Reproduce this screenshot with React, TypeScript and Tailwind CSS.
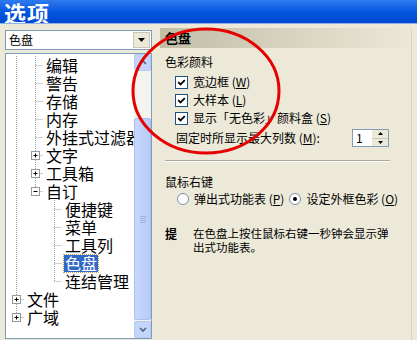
import React from 'react';

type Row = { t: string; l: 0 | 1 | 2; box?: '+' | '-'; sel?: boolean };

const rows: Row[] = [
  { t: '编辑', l: 1 },
  { t: '警告', l: 1 },
  { t: '存储', l: 1 },
  { t: '内存', l: 1 },
  { t: '外挂式过滤器', l: 1 },
  { t: '文字', l: 1, box: '+' },
  { t: '工具箱', l: 1, box: '+' },
  { t: '自订', l: 1, box: '-' },
  { t: '便捷键', l: 2 },
  { t: '菜单', l: 2 },
  { t: '工具列', l: 2 },
  { t: '色盘', l: 2, sel: true },
  { t: '连结管理', l: 2 },
  { t: '文件', l: 0, box: '+' },
  { t: '广域', l: 0, box: '+' },
];

const LX = [10.5, 29.5, 48.5];

function Gutter({ row, i }: { row: Row; i: number }) {
  const w = (row.l + 1) * 19;
  const lines: React.ReactNode[] = [];
  // root level vertical
  lines.push(<line key="v0" x1={LX[0]} y1={0} x2={LX[0]} y2={i === 14 ? 9 : 18} />);
  if (i <= 7) lines.push(<line key="v1" x1={LX[1]} y1={0} x2={LX[1]} y2={i === 7 ? 9 : 18} />);
  if (i >= 8 && i <= 12) lines.push(<line key="v2" x1={LX[2]} y1={0} x2={LX[2]} y2={i === 12 ? 9 : 18} />);
  const x = LX[row.l];
  lines.push(<line key="h" x1={x} y1={9.5} x2={x + 8} y2={9.5} />);
  return (
    <svg width={w} height={18} className="shrink-0">
      <g stroke="#a0a0a0" strokeDasharray="1 1" strokeWidth={1}>
        {lines}
      </g>
      {row.box && (
        <g>
          <rect x={x - 4} y={5.5} width={8} height={8} fill="#fff" stroke="#919b9c" />
          <line x1={x - 2} y1={9.5} x2={x + 2} y2={9.5} stroke="#000" />
          {row.box === '+' && <line x1={x} y1={7.5} x2={x} y2={11.5} stroke="#000" />}
        </g>
      )}
    </svg>
  );
}

function Check() {
  return (
    <span className="w-[13px] h-[13px] border border-[#1c5180] bg-white flex items-center justify-center shrink-0">
      <svg width="9" height="9" viewBox="0 0 9 9">
        <path d="M1.2 4.2 L3.5 6.5 L7.8 2.2" fill="none" stroke="#000" strokeWidth="1.8" />
      </svg>
    </span>
  );
}

function Radio({ on }: { on?: boolean }) {
  return (
    <span className="w-[12px] h-[12px] rounded-full border border-[#7a8ea8] bg-white flex items-center justify-center shrink-0">
      {on && <span className="w-[4px] h-[4px] rounded-full bg-black" />}
    </span>
  );
}

export default function App() {
  return (
    <div className="w-[417px] h-[340px] bg-[#ece9d8] relative overflow-hidden font-['Noto_Sans_CJK_SC',sans-serif] text-black">
      {/* title bar */}
      <div className="h-[23px] bg-gradient-to-b from-[#2f7bf0] via-[#0556e0] to-[#0048cf] text-white font-bold text-[22px] leading-[24px] pl-[4px] tracking-[1px] overflow-hidden">
        选项
      </div>
      <div className="h-[1px] bg-[#8fb0e8]" />

      <div className="flex gap-[8px] pl-[5px] pt-[4px]">
        {/* left column */}
        <div className="w-[147px] pt-[2px] flex flex-col gap-[3px]">
          <div className="h-[20px] border border-[#7f9db9] bg-white flex items-center">
            <span className="flex-1 pl-[3px] text-[12px] leading-[18px]">色盘</span>
            <span className="w-[17px] h-[16px] mr-[1px] bg-[#ece9d8] border border-[#c9c7ba] flex items-center justify-center">
              <svg width="7" height="4"><path d="M0 0 H7 L3.5 4 Z" fill="#000" /></svg>
            </span>
          </div>
          <div className="h-[286px] border border-[#7f9db9] bg-white flex">
            <div className="flex-1 overflow-hidden pt-[2px]">
              {rows.map((r, i) => (
                <div key={r.t} className="h-[18px] flex items-center whitespace-nowrap">
                  <Gutter row={r} i={i} />
                  <span
                    className={
                      r.sel
                        ? 'ml-[1px] px-[1px] text-[16px] leading-[17px] bg-[#316ac5] text-white outline outline-1 outline-dotted outline-[#c0a060]'
                        : 'ml-[2px] text-[16px] leading-[18px]'
                    }
                  >
                    {r.t}
                  </span>
                </div>
              ))}
            </div>
            {/* scrollbar */}
            <div className="w-[17px] flex flex-col bg-[#f4f3ee]">
              <div className="h-[17px] rounded-[2px] bg-[#c4d5fb] border border-[#b4c8f6] flex items-center justify-center">
                <svg width="8" height="5"><path d="M1 4 L4 1 L7 4" fill="none" stroke="#4d6185" strokeWidth="1.6" /></svg>
              </div>
              <div className="h-[47px]" />
              <div className="flex-1 rounded-[2px] bg-gradient-to-r from-[#c8d8fc] to-[#b8cbf7] border border-[#a8bff2] flex items-center justify-center">
                <div className="flex flex-col gap-[1px]">
                  <div className="w-[6px] h-[1px] bg-[#9cb1e4]" />
                  <div className="w-[6px] h-[1px] bg-[#9cb1e4]" />
                  <div className="w-[6px] h-[1px] bg-[#9cb1e4]" />
                  <div className="w-[6px] h-[1px] bg-[#9cb1e4]" />
                </div>
              </div>
              <div className="h-[17px] mt-[1px] rounded-[2px] bg-[#c4d5fb] border border-[#b4c8f6] flex items-center justify-center">
                <svg width="8" height="5"><path d="M1 1 L4 4 L7 1" fill="none" stroke="#4d6185" strokeWidth="1.6" /></svg>
              </div>
            </div>
          </div>
        </div>

        {/* right column */}
        <div className="w-[252px] h-[320px] border-r border-[#d8d4c4] text-[12px] leading-[16px]">
          <div className="h-[20px] bg-gradient-to-r from-[#c1bda6] to-[#ebe8d6] pl-[5px] font-bold text-[13px] leading-[20px]">
            色盘
          </div>
          <div className="pl-[5px]">
            <div className="mt-[6px]">色彩颜料</div>
            <div className="mt-[3px] pl-[10px] flex flex-col">
              <div className="h-[18px] flex items-center gap-[5px]"><Check /><span>宽边框 (<u>W</u>)</span></div>
              <div className="h-[18px] flex items-center gap-[5px]"><Check /><span>大样本 (<u>L</u>)</span></div>
              <div className="h-[18px] flex items-center gap-[5px]"><Check /><span>显示「无色彩」颜料盒 (<u>S</u>)</span></div>
            </div>
            <div className="mt-[2px] h-[18px] pl-[11px] flex items-center">
              <span className="flex-1">固定时所显示最大列数 (<u>M</u>):</span>
              <span className="w-[37px] h-[18px] mr-[22px] border border-[#7f9db9] bg-white flex items-center">
                <span className="flex-1 pl-[3px]">1</span>
                <span className="w-[16px] h-[16px] flex flex-col bg-[#ece9d8]">
                  <span className="flex-1 flex items-center justify-center border-b border-[#c9c7ba]">
                    <svg width="5" height="3"><path d="M0 3 L2.5 0 L5 3 Z" fill="#000" /></svg>
                  </span>
                  <span className="flex-1 flex items-center justify-center">
                    <svg width="5" height="3"><path d="M0 0 L2.5 3 L5 0 Z" fill="#000" /></svg>
                  </span>
                </span>
              </span>
            </div>
            <div className="mt-[13px] w-[225px] h-[2px] border-t border-[#aca899] border-b border-b-white" />
            <div className="mt-[12px]">鼠标右键</div>
            <div className="mt-[1px] h-[16px] pl-[12px] flex items-center">
              <Radio />
              <span className="ml-[5px]">弹出式功能表 (<u>P</u>)</span>
              <span className="ml-[5px]"><Radio on /></span>
              <span className="ml-[5px]">设定外框色彩 (<u>O</u>)</span>
            </div>
            <div className="mt-[19px] flex">
              <span className="w-[28px] font-bold">提</span>
              <span className="leading-[14px] text-[11.5px] whitespace-nowrap">
                在色盘上按住鼠标右键一秒钟会显示弹
                <br />
                出式功能表。
              </span>
            </div>
          </div>
        </div>
      </div>

      {/* red annotation ellipse */}
      <svg className="absolute left-0 top-0 pointer-events-none" width="417" height="340">
        <ellipse cx="206" cy="91" rx="73" ry="62" fill="none" stroke="#e60000" strokeWidth="3" />
      </svg>
    </div>
  );
}
